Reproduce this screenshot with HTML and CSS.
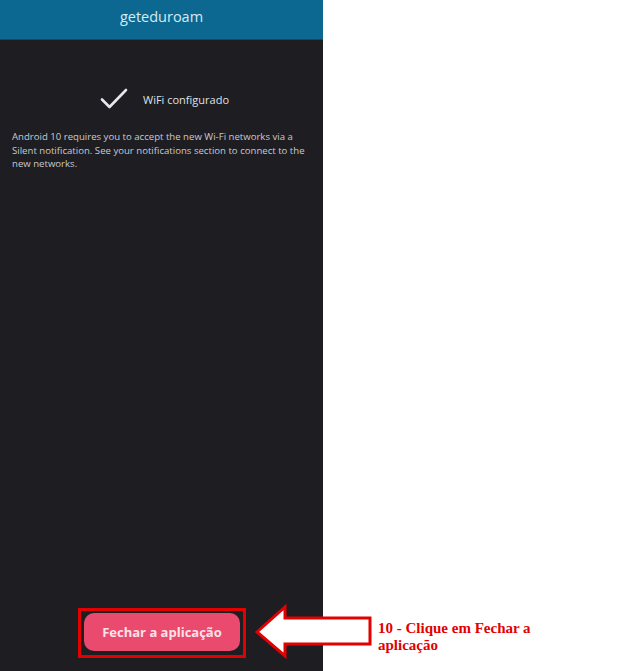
FILE: index.html
```html
<!DOCTYPE html>
<html lang="pt">
<head>
<meta charset="UTF-8" />
<meta name="viewport" content="width=device-width, initial-scale=1" />
<title>geteduroam - passo 10</title>
<link rel="stylesheet" href="styles.css">
</head>
<body>
<div class="page">
  <div class="phone">
    <header class="topbar">geteduroam</header>
    <main class="content">
      <div class="status">
        <svg class="check" width="28" height="22" viewBox="0 0 28 22" aria-hidden="true">
          <path d="M2 11.5 L9.5 19 L26 2" fill="none" stroke="#e4e7ec" stroke-width="2.6" stroke-linecap="round" stroke-linejoin="round"/>
        </svg>
        <span class="status-text">WiFi configurado</span>
      </div>
      <p class="info">Android 10 requires you to accept the new Wi-Fi networks via a Silent notification. See your notifications section to connect to the new networks.</p>
    </main>
    <div class="footer">
      <div class="highlight">
        <button class="close-btn">Fechar a aplicação</button>
      </div>
    </div>
  </div>

  <!-- annotation -->
  <svg class="arrow" width="120" height="56" viewBox="0 0 120 56" aria-hidden="true">
    <polygon points="2,28 30,3 30,14 115,14 115,40 30,40 30,52" fill="#fff" stroke="#e30000" stroke-width="3" stroke-linejoin="miter"/>
  </svg>
  <p class="note">10 - Clique em Fechar a aplicação</p>
</div>
</body>
</html>
```

FILE: styles.css
```css
body {
  margin: 0;
  background: #fff;
  font-family: 'Open Sans', 'Noto Sans', sans-serif;
}
.page {
  position: relative;
  height: 671px;
  display: flex;
}
.phone {
  width: 323px;
  height: 100%;
  background: #1e1d22;
  display: flex;
  flex-direction: column;
}
.topbar {
  height: 40px;
  flex: none;
  background: #0c6890;
  color: #d6ebf3;
  font-size: 14.5px;
  line-height: 34px;
  text-align: center;
  border-bottom: 1px solid #0a4c69;
  box-sizing: border-box;
}
.content {
  flex: 1;
  padding: 48px 12px 0;
}
.status {
  display: flex;
  align-items: center;
  justify-content: center;
  gap: 15px;
  margin-left: 6px;
}
.check {
  display: block;
}
.status-text {
  color: #dfe1e5;
  font-size: 11px;
  padding-top: 1px;
}
.info {
  margin: 20px 0 0;
  color: #c9cacd;
  font-size: 9.6px;
  line-height: 13.5px;
}
.footer {
  display: flex;
  justify-content: center;
  padding: 0 0 13px 1px;
}
.highlight {
  border: 3px solid #e30000;
  padding: 2px 3px 4px;
}
.close-btn {
  display: block;
  width: 156px;
  height: 38px;
  border: none;
  border-radius: 10px;
  background: #e94a6d;
  color: #f9e3e8;
  font-family: 'Open Sans', 'Noto Sans', sans-serif;
  font-size: 13px;
  font-weight: 700;
  cursor: pointer;
}
.arrow {
  position: absolute;
  left: 255px;
  top: 604px;
}
.note {
  position: absolute;
  left: 378px;
  top: 620px;
  width: 180px;
  margin: 0;
  color: #e30000;
  font-family: 'Liberation Serif', serif;
  font-weight: 700;
  font-size: 15px;
  line-height: 17px;
}
```
